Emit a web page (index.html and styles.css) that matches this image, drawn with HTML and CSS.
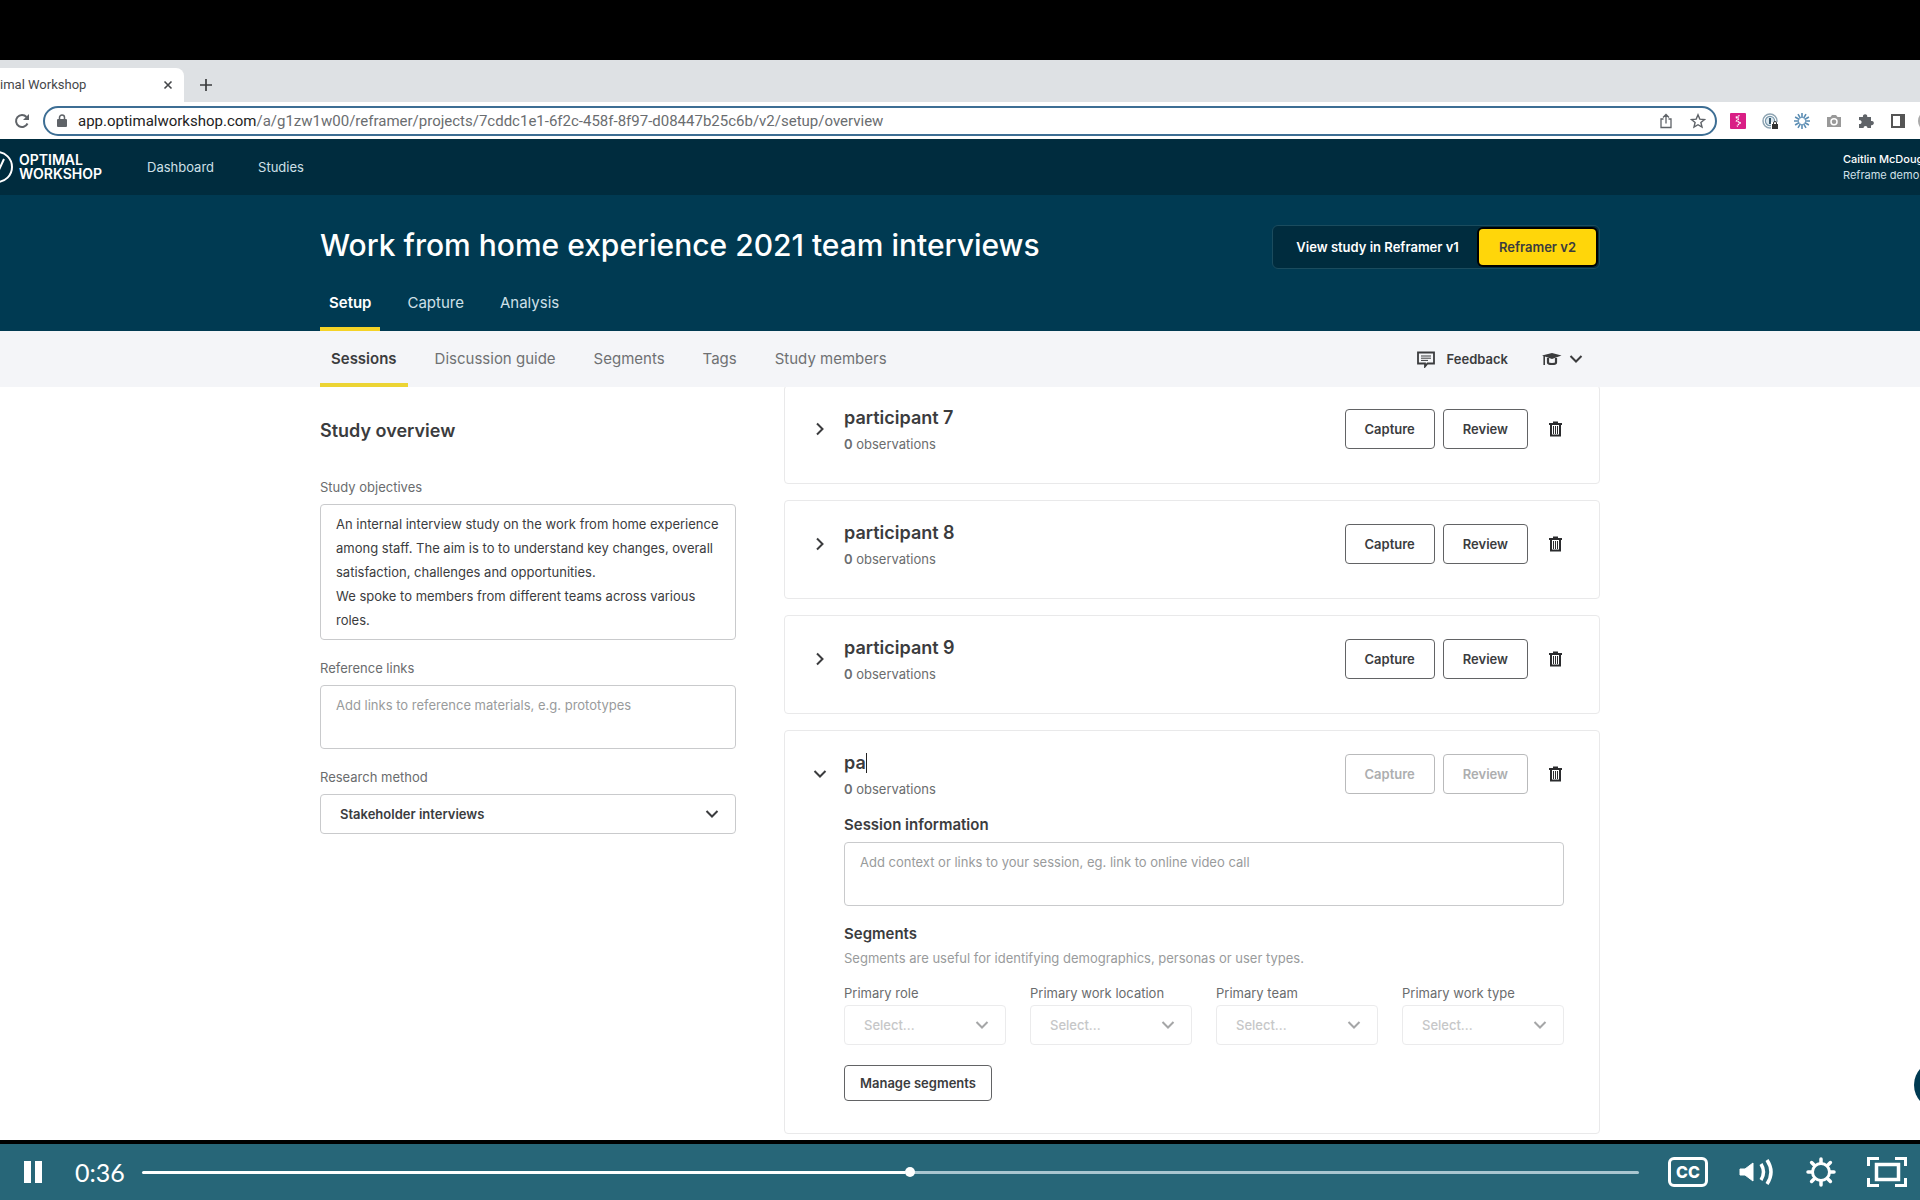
FILE: index.html
```html
<!DOCTYPE html>
<html lang="en">
<head>
    <meta charset="utf-8">
    <title>Optimal Workshop</title>
    <link rel="stylesheet" href="styles.css">
</head>
<body>
    <svg class="sprite" aria-hidden="true">
        <symbol id="chevron-down" viewBox="0 0 14 14"><path d="M1.500 4l5.500 5.500L12.500 4" fill="none" stroke="currentColor" stroke-width="2"/></symbol>
        <symbol id="chevron-right" viewBox="0 0 14 14"><path d="M4 1.500L9.500 7 4 12.500" fill="none" stroke="currentColor" stroke-width="2"/></symbol>
        <symbol id="trash" viewBox="0 0 17 18"><path d="M2 4h13M6 2.500h5M4 4v11.500h9V4" fill="none" stroke="currentColor" stroke-width="2"/><path d="M6.500 6v8M8.500 6v8M10.500 6v8" stroke="currentColor" stroke-width="1"/></symbol>
    </svg>

    <!-- Browser window -->
    <div class="letterbox"></div>
    <div class="tab-strip">
        <div class="browser-tab">
            <span class="tab-title">imal Workshop</span>
            <button class="plain" aria-label="Close tab"><svg width="10" height="10" viewBox="0 0 10 10"><path d="M1.500 1.500l7 7M8.500 1.500l-7 7" stroke="currentColor" stroke-width="1.600"/></svg></button>
        </div>
        <button class="plain new-tab" aria-label="New tab"><svg width="14" height="14" viewBox="0 0 14 14"><path d="M7 1v12M1 7h12" stroke="currentColor" stroke-width="1.700"/></svg></button>
    </div>
    <div class="toolbar">
        <button class="plain reload" aria-label="Reload"><svg width="16" height="16" viewBox="0 0 16 16"><path d="M13.500 10.500A6 6 0 1 1 12.500 4" fill="none" stroke="currentColor" stroke-width="2"/><path d="M15 1v6H9z" fill="currentColor"/></svg></button>
        <div class="omnibox">
            <svg class="lock" width="10" height="13" viewBox="0 0 10 13"><rect x="0" y="5" width="10" height="8" rx="1" fill="currentColor"/><path d="M2.500 5V3.500a2.500 2.500 0 0 1 5 0V5" fill="none" stroke="currentColor" stroke-width="1.500"/></svg>
            <span class="url"><b>app.optimalworkshop.com</b>/a/g1zw1w00/reframer/projects/7cddc1e1-6f2c-458f-8f97-d08447b25c6b/v2/setup/overview</span>
            <svg width="14" height="16" viewBox="0 0 14 16"><path d="M4.500 6H2v8.500h10V6H9.500M7 10.500V2M4 4.500l3-3 3 3" fill="none" stroke="currentColor" stroke-width="1.300"/></svg>
            <svg width="16" height="16" viewBox="0 0 16 16"><path d="M8 1.800l1.800 4.300 4.700.4-3.600 3 1.100 4.600L8 11.700l-4 2.400 1.100-4.600-3.600-3 4.700-.4z" fill="none" stroke="currentColor" stroke-width="1.400"/></svg>
        </div>
        <div class="extensions">
            <svg width="16" height="16" viewBox="0 0 16 16"><rect width="16" height="16" rx="1" fill="#d91e85"/><path d="M9.500 2.500L6.500 4 9 5.500 6.500 8 10 9.500 7 13.500M6.500 4v2M10 9.500v2" fill="none" stroke="#fff" stroke-width="1.300" stroke-dasharray="1.600 .6"/></svg>
            <svg width="16" height="16" viewBox="0 0 16 16"><circle cx="8" cy="8" r="7" fill="none" stroke="#8fa5b3" stroke-width="1.500"/><circle cx="8" cy="8" r="4.600" fill="#dbe7ee" stroke="#7796aa" stroke-width="1.200"/><path d="M8 5v6" stroke="#36586c" stroke-width="2"/><path d="M9 9h7v7H9z" fill="#fff"/><rect x="10" y="11" width="6" height="5" fill="#333"/><path d="M11.500 11v-1a1.500 1.500 0 0 1 3 0v1" fill="none" stroke="#333"/></svg>
            <svg width="16" height="16" viewBox="0 0 16 16"><path d="M8 0v5M8 11v5M0 8h5M11 8h5M1.100 4l4.300 2.500M10.600 9.500l4.300 2.500M4 1.100l2.500 4.300M9.500 10.600l2.500 4.300M12 1.100L9.500 5.400M6.500 10.600L4 14.900M14.900 4l-4.300 2.500M5.400 9.500L1.100 12" stroke="#5b8db3" stroke-width="1.600"/></svg>
            <svg width="16" height="16" viewBox="0 0 16 16"><path d="M1 4h3.500L6 2h4l1.500 2H15v10H1z" fill="#999"/><circle cx="8" cy="8.800" r="3" fill="#999" stroke="#fff" stroke-width="1.500"/></svg>
            <svg width="16" height="16" viewBox="0 0 16 16"><path d="M1 4h4a2.200 2.200 0 1 1 4.200 0H13v4a2.200 2.200 0 1 1 0 4.200V15H9.500a2 2 0 1 0-4 0H1v-4a2 2 0 1 0 0-3.800z" fill="#5f6368"/></svg>
            <svg width="16" height="16" viewBox="0 0 16 16"><rect x="2" y="2" width="12" height="12" fill="none" stroke="#555" stroke-width="2"/><path d="M10 2h4v12h-4z" fill="#555"/></svg>
            <svg class="avatar" width="22" height="22" viewBox="0 0 22 22"><circle cx="11" cy="11" r="11" fill="#aaa"/></svg>
        </div>
    </div>

    <!-- Application -->
    <header class="app-header">
        <svg class="logo-mark" width="32" height="34" viewBox="0 0 32 34"><circle cx="15" cy="17" r="15" fill="none" stroke="#fff" stroke-width="2"/><path d="M13 23l3-1 6-13M7 10l6 13" fill="none" stroke="#fff" stroke-width="2"/></svg>
        <a class="logo" href="#">OPTIMAL<br>WORKSHOP</a>
        <nav class="main-nav">
            <a href="#">Dashboard</a>
            <a href="#">Studies</a>
        </nav>
        <div class="account"><strong>Caitlin McDoug</strong><br>Reframe demo</div>
    </header>

    <section class="hero">
        <div class="container">
            <div class="hero-top">
                <h1>Work from home experience 2021 team interviews</h1>
                <div class="version-toggle">
                    <button>View study in Reframer v1</button>
                    <button class="current">Reframer v2</button>
                </div>
            </div>
            <nav class="hero-tabs">
                <a class="active" href="#">Setup</a>
                <a href="#">Capture</a>
                <a href="#">Analysis</a>
            </nav>
        </div>
    </section>

    <div class="subnav">
        <div class="container subnav-inner">
            <nav class="sub-tabs">
                <a class="active" href="#">Sessions</a>
                <a href="#">Discussion guide</a>
                <a href="#">Segments</a>
                <a href="#">Tags</a>
                <a href="#">Study members</a>
            </nav>
            <div class="tools">
                <button class="plain feedback"><svg width="18" height="17" viewBox="0 0 18 17"><path d="M1 1.500h16v11H10.500L8 15.500v-3H1z" fill="none" stroke="currentColor" stroke-width="1.800"/><path d="M4 5h10M4 7.200h10M4 9.400h7" stroke="currentColor"/></svg>Feedback</button>
                <button class="plain learn" aria-label="Learn"><svg width="20" height="14" viewBox="0 0 20 14"><path d="M0 3.500L10 1l9.500 2.500L10 7z" fill="currentColor"/><path d="M6 6v4.500q0 1.500 4 1.500t4-1.500V6" fill="none" stroke="currentColor" stroke-width="2.200"/><path d="M2.200 4v9" stroke="currentColor" stroke-width="1.600"/></svg><svg width="14" height="14"><use href="#chevron-down"/></svg></button>
            </div>
        </div>
    </div>

    <main class="content">
        <div class="container columns">
            <form class="overview">
                <h2>Study overview</h2>
                <label for="objectives">Study objectives</label>
                <textarea id="objectives" rows="5">An internal interview study on the work from home experience among staff. The aim is to to understand key changes, overall satisfaction, challenges and opportunities.
We spoke to members from different teams across various roles.</textarea>
                <label for="links">Reference links</label>
                <textarea id="links" rows="2" placeholder="Add links to reference materials, e.g. prototypes"></textarea>
                <label for="method">Research method</label>
                <div class="select">
                    <select id="method"><option>Stakeholder interviews</option></select>
                    <svg width="14" height="14"><use href="#chevron-down"/></svg>
                </div>
            </form>

            <div class="sessions">
                <article class="card">
                    <div class="card-row">
                        <button class="plain expand" aria-label="Expand"><svg width="14" height="14"><use href="#chevron-right"/></svg></button>
                        <div class="card-name"><h3>participant 7</h3><p><b>0</b> observations</p></div>
                        <button class="btn">Capture</button>
                        <button class="btn">Review</button>
                        <button class="plain delete" aria-label="Delete"><svg width="17" height="18"><use href="#trash"/></svg></button>
                    </div>
                </article>
                <article class="card">
                    <div class="card-row">
                        <button class="plain expand" aria-label="Expand"><svg width="14" height="14"><use href="#chevron-right"/></svg></button>
                        <div class="card-name"><h3>participant 8</h3><p><b>0</b> observations</p></div>
                        <button class="btn">Capture</button>
                        <button class="btn">Review</button>
                        <button class="plain delete" aria-label="Delete"><svg width="17" height="18"><use href="#trash"/></svg></button>
                    </div>
                </article>
                <article class="card">
                    <div class="card-row">
                        <button class="plain expand" aria-label="Expand"><svg width="14" height="14"><use href="#chevron-right"/></svg></button>
                        <div class="card-name"><h3>participant 9</h3><p><b>0</b> observations</p></div>
                        <button class="btn">Capture</button>
                        <button class="btn">Review</button>
                        <button class="plain delete" aria-label="Delete"><svg width="17" height="18"><use href="#trash"/></svg></button>
                    </div>
                </article>
                <article class="card">
                    <div class="card-row">
                        <button class="plain expand" aria-label="Collapse"><svg width="14" height="14"><use href="#chevron-down"/></svg></button>
                        <div class="card-name">
                            <div class="name-edit"><input type="text" value="pa" size="2" aria-label="Participant name"><span class="caret"></span></div>
                            <p><b>0</b> observations</p>
                        </div>
                        <button class="btn" disabled>Capture</button>
                        <button class="btn" disabled>Review</button>
                        <button class="plain delete" aria-label="Delete"><svg width="17" height="18"><use href="#trash"/></svg></button>
                    </div>
                    <div class="card-body">
                        <label class="heading" for="session-info">Session information</label>
                        <textarea id="session-info" rows="2" placeholder="Add context or links to your session, eg. link to online video call"></textarea>
                        <h4 class="heading">Segments</h4>
                        <p class="hint">Segments are useful for identifying demographics, personas or user types.</p>
                        <div class="segments">
                            <div>
                                <label for="role">Primary role</label>
                                <div class="select empty"><select id="role"><option>Select...</option></select><svg width="14" height="14"><use href="#chevron-down"/></svg></div>
                            </div>
                            <div>
                                <label for="location">Primary work location</label>
                                <div class="select empty"><select id="location"><option>Select...</option></select><svg width="14" height="14"><use href="#chevron-down"/></svg></div>
                            </div>
                            <div>
                                <label for="team">Primary team</label>
                                <div class="select empty"><select id="team"><option>Select...</option></select><svg width="14" height="14"><use href="#chevron-down"/></svg></div>
                            </div>
                            <div>
                                <label for="type">Primary work type</label>
                                <div class="select empty"><select id="type"><option>Select...</option></select><svg width="14" height="14"><use href="#chevron-down"/></svg></div>
                            </div>
                        </div>
                        <button class="btn manage">Manage segments</button>
                    </div>
                </article>
            </div>
        </div>
        <button class="chat" aria-label="Chat"></button>
    </main>

    <!-- Video player controls -->
    <footer class="player">
        <button class="plain" aria-label="Pause"><svg width="18" height="22" viewBox="0 0 18 22"><path d="M0 0h7v22H0zM11 0h7v22h-7z" fill="currentColor"/></svg></button>
        <span class="time">0:36</span>
        <input class="seek" type="range" min="0" max="1000" value="513" aria-label="Seek">
        <div class="player-buttons">
            <button class="plain cc" aria-label="Captions">CC</button>
            <button class="plain" aria-label="Volume"><svg width="36" height="30" viewBox="0 0 36 30"><path d="M1 12h5l8-6v18l-8-6H1z" fill="currentColor" stroke="currentColor" stroke-linejoin="round"/><path d="M22 7q5 8 0 16M28 3q8 12 0 24" fill="none" stroke="currentColor" stroke-width="3.500"/></svg></button>
            <button class="plain" aria-label="Settings"><svg width="30" height="30" viewBox="0 0 30 30"><circle cx="15" cy="15" r="8.500" fill="none" stroke="currentColor" stroke-width="3"/><path d="M15 2v4M15 24v4M2 15h4M24 15h4M5.600 5.600l3 3M21.400 21.400l3 3M5.600 24.400l3-3M21.400 8.600l3-3" stroke="currentColor" stroke-width="3.500" stroke-linecap="round"/></svg></button>
            <button class="plain" aria-label="Full screen"><svg width="40" height="30" viewBox="0 0 40 30"><path d="M1.500 9V1.500H12M28 1.500h10.500V9M38.500 21v7.500H28M12 28.500H1.500V21" fill="none" stroke="currentColor" stroke-width="3"/><rect x="9.500" y="7.500" width="22" height="15" fill="none" stroke="currentColor" stroke-width="3.500"/></svg></button>
        </div>
    </footer>
</body>
</html>
```

FILE: styles.css
```css
* {
    box-sizing: border-box;
}

body {
    margin: 0;
    height: 100vh;
    display: flex;
    flex-direction: column;
    overflow: hidden;
    font-family: Inter, "Liberation Sans", sans-serif;
    font-size: 13px;
    line-height: 20px;
    color: #3b3c3e;
    background-color: #fff;
}

h1, h2, h3, h4, p {
    margin: 0;
}

a {
    color: inherit;
    text-decoration: none;
}

button, input, textarea, select {
    font: inherit;
    color: inherit;
}

svg {
    display: block;
    flex: none;
}

.sprite {
    position: absolute;
    width: 0;
    height: 0;
}

.plain {
    display: flex;
    align-items: center;
    justify-content: center;
    padding: 0;
    border: none;
    background: none;
    flex: none;
}

.container {
    width: 100%;
    max-width: 1280px;
    margin: 0 auto;
}

/* Browser window */
.letterbox {
    flex: none;
    height: 60px;
    background-color: #000;
}

.tab-strip {
    flex: none;
    height: 42px;
    display: flex;
    align-items: flex-end;
    background-color: #dee1e4;
    font-family: Roboto, sans-serif;
}

.browser-tab {
    width: 184px;
    height: 34px;
    padding-right: 11px;
    display: flex;
    align-items: center;
    justify-content: space-between;
    background-color: #fff;
    border-radius: 0 8px 0 0;
    color: #45474a;
}

.new-tab {
    height: 34px;
    margin-left: 15px;
}

.toolbar {
    flex: none;
    height: 37px;
    display: flex;
    align-items: center;
    padding-left: 14px;
    background-color: #fff;
    color: #5f6368;
    overflow: hidden;
}

.omnibox {
    flex: 1;
    height: 30px;
    margin: 0 13px;
    padding: 0 9px 0 12px;
    display: flex;
    align-items: center;
    gap: 17px;
    border: 2px solid #3d6e94;
    border-radius: 15px;
    font-family: Roboto, sans-serif;
    font-size: 15px;
}

.url {
    flex: 1;
    white-space: nowrap;
    color: #6a6d70;
}

.url b {
    font-weight: normal;
    color: #222;
}

.lock {
    margin-right: -6px;
}

.extensions {
    display: flex;
    align-items: center;
    gap: 16px;
    margin-right: -20px;
}

.avatar {
    margin-left: -4px;
}

/* Application header */
.app-header {
    flex: none;
    height: 56px;
    display: flex;
    align-items: center;
    background-color: #002c3e;
    color: #cfe0e8;
    overflow: hidden;
}

.logo-mark {
    margin-left: -18px;
}

.logo {
    margin-left: 5px;
    font-size: 14px;
    font-weight: 600;
    line-height: 14px;
    color: #fff;
}

.main-nav {
    flex: 1;
    display: flex;
    gap: 44px;
    padding-left: 45px;
}

.account {
    width: 77px;
    font-size: 11px;
    line-height: 16px;
    white-space: nowrap;
}

.account strong {
    font-weight: 500;
    color: #fff;
}

.hero {
    flex: none;
    height: 136px;
    background-color: #003a52;
    color: #cfe0e8;
}

.hero-top {
    display: flex;
    align-items: flex-start;
    justify-content: space-between;
    height: 84px;
    padding-top: 30px;
}

h1 {
    font-size: 30px;
    line-height: 40px;
    font-weight: 500;
    color: #fff;
}

.version-toggle {
    display: flex;
    padding: 3px;
    border: 1px solid #1b4c5e;
    border-radius: 6px;
    background-color: #002c3e;
    color: #fff;
}

.version-toggle button {
    height: 36px;
    padding: 0 20px;
    border: none;
    border-radius: 4px;
    background: none;
    font-weight: 600;
}

.version-toggle .current {
    background-color: #ffd60a;
    color: #3b3c3e;
    box-shadow: 0 0 0 2px #000;
}

.hero-tabs {
    display: flex;
    gap: 18px;
    font-size: 15px;
}

.hero-tabs a {
    height: 52px;
    padding: 14px 9px 0;
    border-bottom: 4px solid transparent;
}

.hero-tabs .active {
    border-color: #f5d327;
    font-weight: 600;
    color: #fff;
}

.subnav {
    flex: none;
    background-color: #f4f5f8;
}

.subnav-inner {
    display: flex;
    justify-content: space-between;
}

.sub-tabs {
    display: flex;
    gap: 16px;
    font-size: 15px;
    color: #6f7173;
}

.sub-tabs a {
    height: 56px;
    padding: 18px 11px 0;
    border-bottom: 4px solid transparent;
}

.sub-tabs .active {
    border-color: #ecd433;
    font-weight: 600;
    color: #3b3c3e;
}

.tools {
    display: flex;
    align-items: center;
    gap: 34px;
    padding-right: 17px;
}

.feedback {
    gap: 12px;
    font-weight: 600;
}

.learn {
    gap: 7px;
}

/* Study overview */
.content {
    flex: 1;
    min-height: 0;
    position: relative;
    overflow: hidden;
}

.columns {
    display: grid;
    grid-template-columns: minmax(0, 416px) minmax(0, 1fr);
    gap: 48px;
}

.overview {
    padding-top: 32px;
}

h2, h3, .name-edit {
    font-size: 18px;
    line-height: 24px;
    font-weight: 600;
}

h2 {
    margin-bottom: 34px;
}

label {
    display: block;
    color: #6a6c6e;
}

textarea {
    display: block;
    width: 100%;
    margin: 7px 0 18px;
    padding: 7px 15px;
    border: 1px solid #c9cacc;
    border-radius: 4px;
    background-color: #fff;
    line-height: 24px;
    resize: none;
    overflow: hidden;
}

textarea::placeholder {
    color: #999b9c;
}

.select {
    display: grid;
    align-items: center;
    margin-top: 7px;
}

.select select,
.select svg {
    grid-area: 1 / 1;
}

.select select {
    width: 100%;
    height: 40px;
    padding: 0 19px;
    border: 1px solid #c9cacc;
    border-radius: 4px;
    background-color: #fff;
    appearance: none;
    font-weight: 600;
}

.select svg {
    justify-self: end;
    margin-right: 17px;
    pointer-events: none;
}

.select.empty select {
    border-color: #ebebec;
    color: #c6c7c8;
    font-weight: 500;
}

.select.empty svg {
    color: #a5a6a7;
}

/* Session cards */
.sessions {
    display: flex;
    flex-direction: column;
    gap: 16px;
    margin-top: -2px;
}

.card {
    padding: 18px 35px 29px 23px;
    border: 1px solid #e9e9ea;
    border-radius: 4px;
}

.card-row {
    display: flex;
    align-items: center;
    gap: 8px;
}

.expand {
    width: 24px;
    height: 24px;
    margin-right: 4px;
}

.card-name {
    flex: 1;
    padding-top: 2px;
}

.card-name p {
    margin-top: 4px;
    color: #6a6c6e;
}

.card-name b {
    font-weight: 600;
}

.name-edit {
    display: flex;
}

.name-edit input {
    field-sizing: content;
    height: 24px;
    padding: 0;
    border: none;
    outline: none;
}

.caret {
    width: 1px;
    height: 20px;
    margin-top: 2px;
    background-color: #222;
}

.btn {
    height: 40px;
    padding: 0 19px;
    border: 1px solid #626365;
    border-radius: 4px;
    background-color: #fff;
    font-weight: 600;
}

.btn:disabled {
    border-color: #b9babb;
    color: #adaeaf;
}

.delete {
    margin-left: 11px;
    color: #2b2c2e;
}

.card-body {
    padding: 14px 0 3px 36px;
}

.heading {
    font-size: 15px;
    line-height: 24px;
    font-weight: 600;
    color: #3b3c3e;
}

.card-body textarea {
    margin: 5px 0 16px;
}

.hint {
    line-height: 24px;
    color: #999b9c;
}

.segments {
    display: grid;
    grid-template-columns: repeat(4, 1fr);
    gap: 24px;
    margin: 13px 0 20px;
}

.segments .select {
    margin-top: 2px;
}

.manage {
    height: 36px;
    padding: 0 15px;
}

.chat {
    position: absolute;
    right: -42px;
    bottom: 31px;
    width: 48px;
    height: 48px;
    border: none;
    border-radius: 50%;
    background-color: #003a52;
}

/* Video player */
.player {
    flex: none;
    height: 60px;
    display: flex;
    align-items: center;
    padding: 0 13px 0 24px;
    border-top: 4px solid #000;
    background-color: #276678;
    color: #fff;
}

.time {
    margin-left: 33px;
    width: 67px;
    font-family: Lato, sans-serif;
    font-size: 25px;
}

.seek {
    flex: 1;
    height: 12px;
    margin: 0;
    appearance: none;
    background: none;
}

.seek::-webkit-slider-runnable-track {
    height: 3px;
    border-radius: 2px;
    background: linear-gradient(to right, #fff 51%, #a9c6d0 51%);
}

.seek::-webkit-slider-thumb {
    appearance: none;
    width: 10px;
    height: 10px;
    margin-top: -4px;
    border-radius: 50%;
    background-color: #fff;
}

.player-buttons {
    display: flex;
    align-items: center;
    gap: 31px;
    padding-left: 29px;
}

.cc {
    width: 40px;
    height: 30px;
    border: 3px solid #fff;
    border-radius: 6px;
    font-size: 16px;
    font-weight: 800;
}
```
